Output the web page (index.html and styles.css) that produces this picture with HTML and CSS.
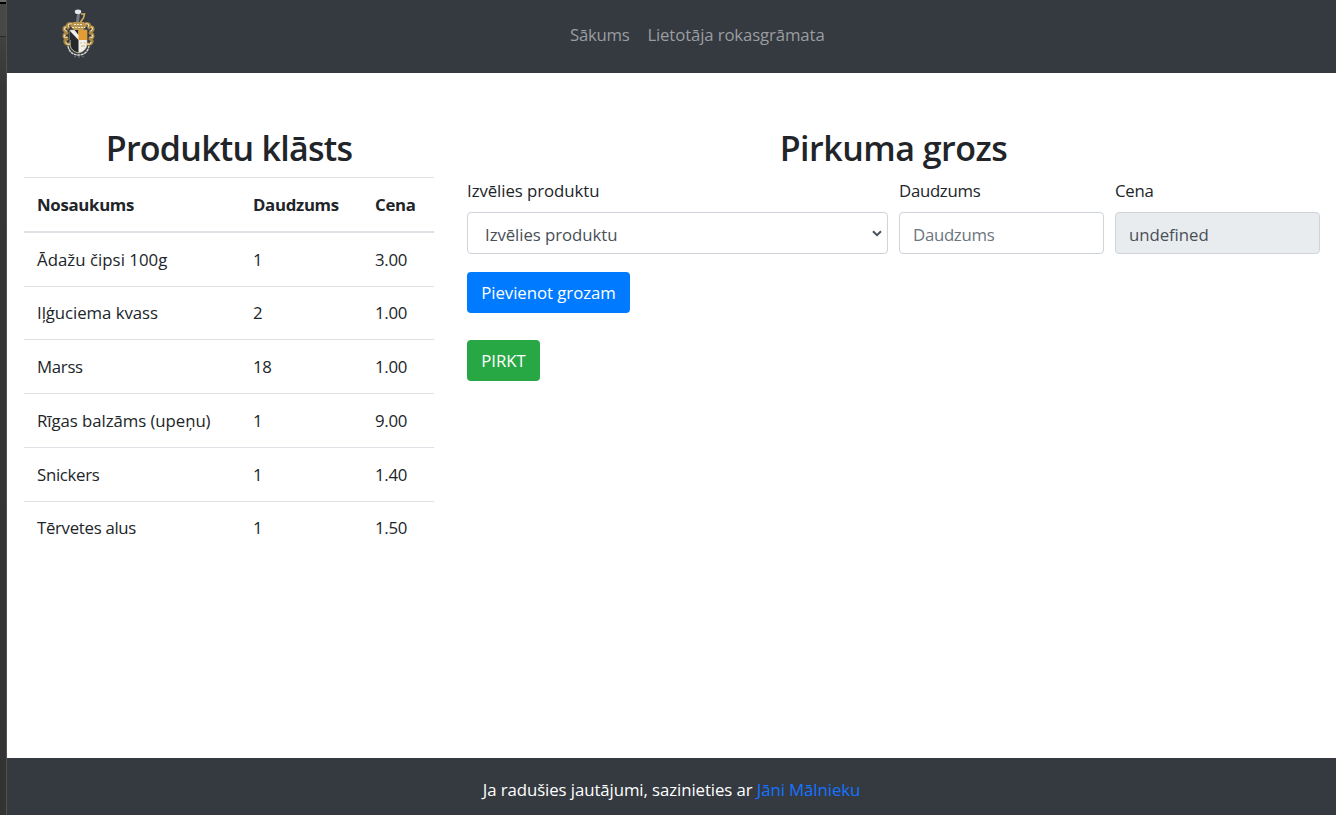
FILE: index.html
```html
<!DOCTYPE html>
<html lang="lv">
<head>
<meta charset="utf-8">
<title>Pirkuma grozs</title>
<link rel="stylesheet" href="styles.css">
</head>
<body>
<div class="edge"></div>
<div class="page">
  <header class="navbar">
    <svg class="crest" viewBox="0 0 36 50" width="36" height="50">
      <g fill="none" stroke="#a98743" stroke-width="3" stroke-linecap="round">
        <path d="M12 16c-3-3-7-1-5 3M7 18c-5-1-5 3-2 5M6 24c-4 1-4 5 0 5M6 30c-4 1-2 6 2 5M23 16c3-3 7-1 5 3M28 18c5-1 5 3 2 5M29 24c4 1 4 5 0 5M29 30c4 1 2 6-2 5"/>
      </g>
      <g fill="none" stroke="#f1dfae" stroke-width="1.1" stroke-linecap="round">
        <path d="M11 15c-3-1-5 1-3 3M5 18c-3 1-1 4 1 4M4 26c-2 2 0 3 2 2M5 33c0 2 2 3 4 2M24 15c3-1 5 1 3 3M30 18c3 1 1 4-1 4M31 26c2 2 0 3-2 2M30 33c0 2-2 3-4 2"/>
      </g>
      <path d="M12 13l11 0 3 4-4 4h-9l-4-4z" fill="#b8934d"/>
      <path d="M13 15.5h9M11 18.5h13" stroke="#eee6cf" stroke-width="1.2" stroke-dasharray="2 1"/>
      <path d="M16 5h3l-1 8h-3z" fill="#747b80"/>
      <ellipse cx="17" cy="2.8" rx="3.2" ry="2.3" fill="#e5e8ea"/>
      <path d="M20 5l3.5 0-1 4-3 4" fill="none" stroke="#d5ad5d" stroke-width="1.6"/>
      <path d="M9 21h17v14c0 5-4 8-8.500 9-5-1-8.500-4-8.500-9z" fill="#f1f0ec" stroke="#c9b88a" stroke-width=".6"/>
      <path d="M9 22l8.500 9H9z" fill="#292b2e"/>
      <path d="M13.500 21h4v5z" fill="#292b2e"/>
      <path d="M17.500 21H26v10h-8.500z" fill="#e49b31"/>
      <path d="M9.500 31h8v12.500c-5-1-8-4-8-8.500z" fill="#25272a"/>
      <path d="M19.500 34h1.500M23 34h1.500M20 37h4" stroke="#d2b46c" stroke-width="1.2"/>
      <path d="M7 37c1 6 5 9 10.500 9S27 43 28 37" fill="none" stroke="#d7d6cf" stroke-width="1.4" stroke-dasharray="3 .5"/>
      <path d="M13 48l2-1M17 48h2M21 47l2 1" fill="none" stroke="#65696d" stroke-width="1.3"/>
    </svg>
    <nav class="links">
      <a class="home">Sākums</a>
      <a class="guide">Lietotāja rokasgrāmata</a>
    </nav>
  </header>
  <main class="content">
    <section class="products">
      <h2 class="title"><span class="title-products">Produktu klāsts</span></h2>
      <table class="table">
        <thead><tr><th class="c-name">Nosaukums</th><th class="c-qty">Daudzums</th><th>Cena</th></tr></thead>
        <tbody>
          <tr><td class="roomy">Ādažu čipsi 100g</td><td>1</td><td>3.00</td></tr>
          <tr><td class="wide">Iļģuciema kvass</td><td>2</td><td>1.00</td></tr>
          <tr><td>Marss</td><td>18</td><td>1.00</td></tr>
          <tr><td class="wide">Rīgas balzāms (upeņu)</td><td>1</td><td>9.00</td></tr>
          <tr><td>Snickers</td><td>1</td><td>1.40</td></tr>
          <tr><td>Tērvetes alus</td><td>1</td><td>1.50</td></tr>
        </tbody>
      </table>
    </section>
    <section class="cart">
      <h2 class="title"><span>Pirkuma grozs</span></h2>
      <div class="fields">
        <div class="field"><label class="wide">Izvēlies produktu</label>
          <div class="control select"><span class="wide">Izvēlies produktu</span>
            <svg width="10" height="7" viewBox="0 0 10 7"><path d="M1 1.200l4 4 4-4" fill="none" stroke="#495057" stroke-width="2"/></svg>
          </div>
        </div>
        <div class="field"><label>Daudzums</label><div class="control placeholder">Daudzums</div></div>
        <div class="field"><label>Cena</label><div class="control disabled wide">undefined</div></div>
      </div>
      <button class="btn add">Pievienot grozam</button>
      <button class="btn buy">PIRKT</button>
    </section>
  </main>
  <footer class="footer"><p>Ja radušies jautājumi, sazinieties ar <a>Jāni Mālnieku</a></p></footer>
</div>
</body>
</html>
```
FILE: styles.css
```css
* { box-sizing: border-box; }
body {
  margin: 0;
  height: 815px;
  display: flex;
  overflow: hidden;
  font-family: "Open Sans", "Noto Sans", sans-serif;
  font-size: 16.8px;
  line-height: 26.4px;
  letter-spacing: -0.3px;
  color: #212529;
  background: #fff;
}
.edge {
  width: 7px;
  border-right: 1px solid #51514d;
  background: linear-gradient(#6b6b6b 0 2px, #000 2px 4px, #484848 4px 36px, #292929 36px 37px, #414141 37px, #363636 90px, #333 100%);
}
.page { flex: 1; display: flex; flex-direction: column; }
.navbar {
  height: 73px;
  background: #343a40;
  display: flex;
  padding: 9px 0 0 54px;
}
.crest { display: block; }
.links { display: flex; gap: 18px; margin-left: 473px; padding-top: 13px; color: #9a9da0; }
.home, .guide { white-space: nowrap; }
.guide { letter-spacing: -0.14px; }
.wide { letter-spacing: -0.06px; }
.roomy { letter-spacing: 0.04px; }
.content { flex: 1; display: flex; gap: 33px; padding: 53px 16px 0 17px; }
.products { width: 410px; }
.cart { flex: 1; }
.title {
  margin: 0;
  height: 51px;
  padding-top: 1px;
  font-size: 34px;
  line-height: 42px;
  font-weight: 600;
  text-align: center;
  letter-spacing: -0.5px;
}
.title-products { letter-spacing: -0.75px; }
.table { width: 100%; table-layout: fixed; border-collapse: separate; border-spacing: 0; }
.table th, .table td { height: 53.8px; padding: 1px 13px 0; text-align: left; border-top: 1px solid #dee2e6; }
.table th { height: 56px; padding-top: 2px; border-bottom: 2px solid #dee2e6; font-weight: 700; }
.table tbody tr:first-child td { height: 52.6px; border-top: 0; padding-top: 2px; }
.c-name { width: 216px; }
.c-qty { width: 122px; }
.fields { display: grid; grid-template-columns: 421px 205px 205px; gap: 11px; }
.field label { display: block; height: 35px; line-height: 28px; }
.control {
  height: 42px;
  border: 1px solid #ced4da;
  border-radius: 4px;
  padding: 2px 13px 0;
  line-height: 40px;
  color: #495057;
}
.select { display: flex; justify-content: space-between; align-items: center; padding: 0 5px 0 17px; }
.select span { padding-top: 3px; }
.placeholder { color: #6c757d; }
.disabled { background: #e9ecef; }
.btn {
  display: block;
  height: 41px;
  border: 0;
  border-radius: 4px;
  padding: 1px 0 0;
  font: inherit;
  letter-spacing: -0.05px;
  color: #fff;
}
.add { width: 163px; margin-top: 18px; background: #007bff; }
.buy { width: 73px; margin-top: 27px; background: #28a745; }
.footer { height: 57px; background: #343a40; color: #fff; text-align: center; }
.footer p { margin: 0; padding-top: 19px; letter-spacing: -0.08px; }
.footer a { color: #1673ff; }
```
